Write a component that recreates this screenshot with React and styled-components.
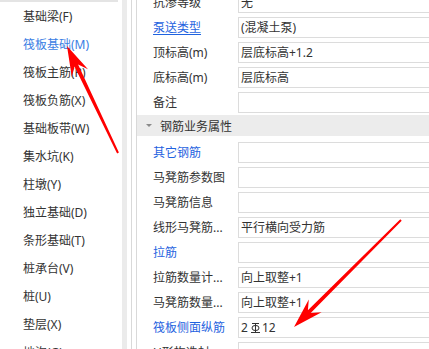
import React from "react";
import styled, { createGlobalStyle } from "styled-components";

const GlobalStyle = createGlobalStyle`
  html, body { margin: 0; padding: 0; background: #fff; overflow: hidden; }
  body { font-family: "Noto Sans", "Noto Sans CJK SC", sans-serif; }
`;

const Page = styled.div`
  position: relative;
  display: flex;
  width: 429px;
  height: 349px;
  overflow: hidden;
  background: #fff;
`;

const LeftPanel = styled.div`
  width: 122px;
  flex-shrink: 0;
  overflow: hidden;
`;

const TopBand = styled.div`
  width: 118px;
  height: 2px;
  background: #e4e4e4;
  margin-bottom: 1px;
`;

const ListItem = styled.div`
  height: 28px;
  line-height: 28px;
  padding-left: 23px;
  font-size: 12px;
  white-space: nowrap;
  color: ${(p) => (p.$active ? "#3a7ee4" : "#333")};
`;

const ScrollTrack = styled.div`
  width: 5px;
  flex-shrink: 0;
  background: #ebebeb;
`;

const Divider = styled.div`
  width: 1px;
  flex-shrink: 0;
  margin-left: ${(p) => p.$gap}px;
  background: #d9d9d9;
`;

const PropPanel = styled.div`
  flex: 1;
  min-width: 0;
  overflow: hidden;
`;

const PropList = styled.div`
  margin-top: -10px;
`;

const Row = styled.div`
  display: flex;
  height: 25px;
  padding: 2px 0;
  box-sizing: border-box;
`;

const Label = styled.div`
  width: 101px;
  flex-shrink: 0;
  padding-left: 16px;
  box-sizing: border-box;
  font-size: 12px;
  line-height: 21px;
  white-space: nowrap;
  overflow: hidden;
  color: ${(p) => (p.$link ? "#1f63e0" : "#333")};
  text-decoration: ${(p) => (p.$underline ? "underline" : "none")};
  text-underline-offset: 2px;
`;

const Value = styled.div`
  flex: 1;
  height: 21px;
  box-sizing: border-box;
  border: 1px solid #dcdcdc;
  border-right: none;
  padding-left: 2px;
  font-size: 12px;
  line-height: 19px;
  color: #333;
  white-space: nowrap;
  display: flex;
  align-items: center;
`;

const HeaderRow = styled.div`
  height: 25px;
  padding-bottom: 4px;
  box-sizing: border-box;
`;

const HeaderBand = styled.div`
  height: 21px;
  background: #ececec;
  display: flex;
  align-items: center;
  font-size: 12px;
  color: #333;
`;

const Caret = styled.span`
  width: 0;
  height: 0;
  margin-left: 9px;
  margin-right: 8px;
  border-left: 3px solid transparent;
  border-right: 3px solid transparent;
  border-top: 3px solid #8a8a8a;
`;

const Overlay = styled.svg`
  position: absolute;
  left: 0;
  top: 0;
  pointer-events: none;
`;

const RebarMark = () => (
  <svg width="11" height="12" viewBox="0 0 11 12" style={{ margin: "0 1px 0 2px" }}>
    <g stroke="#333" strokeWidth="1" fill="none">
      <line x1="2" y1="1.5" x2="9" y2="1.5" />
      <line x1="1" y1="10.5" x2="10" y2="10.5" />
      <line x1="5.5" y1="1.5" x2="5.5" y2="10.5" />
      <ellipse cx="5.5" cy="6" rx="3.5" ry="2.6" />
    </g>
  </svg>
);

const arrowPoints = (tx, ty, px, py, L = 28, W = 9) => {
  const dx = px - tx;
  const dy = py - ty;
  const len = Math.hypot(dx, dy);
  const ux = dx / len;
  const uy = dy / len;
  const nx = -uy;
  const ny = ux;
  const neck = L * 0.72;
  const bx = px - ux * L;
  const by = py - uy * L;
  const kx = px - ux * neck;
  const ky = py - uy * neck;
  const pts = [
    [tx + nx * 1, ty + ny * 1],
    [kx + nx * 2, ky + ny * 2],
    [bx + nx * W, by + ny * W],
    [px, py],
    [bx - nx * W, by - ny * W],
    [kx - nx * 2, ky - ny * 2],
    [tx - nx * 1, ty - ny * 1],
  ];
  return pts.map((p) => p.map((v) => v.toFixed(1)).join(",")).join(" ");
};

const leftItems = [
  "基础梁(F)",
  "筏板基础(M)",
  "筏板主筋(R)",
  "筏板负筋(X)",
  "基础板带(W)",
  "集水坑(K)",
  "柱墩(Y)",
  "独立基础(D)",
  "条形基础(T)",
  "桩承台(V)",
  "桩(U)",
  "垫层(X)",
  "地沟(G)",
];

const topRows = [
  { label: "抗渗等级", value: "无" },
  { label: "泵送类型", value: "(混凝土泵)", link: true, underline: true },
  { label: "顶标高(m)", value: "层底标高+1.2" },
  { label: "底标高(m)", value: "层底标高" },
  { label: "备注", value: "" },
];

const rebarRows = [
  { label: "其它钢筋", value: "", link: true },
  { label: "马凳筋参数图", value: "" },
  { label: "马凳筋信息", value: "" },
  { label: "线形马凳筋...", value: "平行横向受力筋" },
  { label: "拉筋", value: "", link: true },
  { label: "拉筋数量计...", value: "向上取整+1" },
  { label: "马凳筋数量...", value: "向上取整+1" },
  { label: "筏板侧面纵筋", value: "rebar", link: true },
  { label: "U形构造封...", value: "" },
];

const PropRow = ({ r }) => (
  <Row>
    <Label $link={r.link} $underline={r.underline}>{r.label}</Label>
    <Value>
      {r.value === "rebar" ? (
        <>
          2<RebarMark />12
        </>
      ) : (
        r.value
      )}
    </Value>
  </Row>
);

export default function App() {
  return (
    <>
      <GlobalStyle />
      <Page>
        <LeftPanel>
          <TopBand />
          {leftItems.map((t, i) => (
            <ListItem key={t} $active={i === 1}>
              {t}
            </ListItem>
          ))}
        </LeftPanel>
        <ScrollTrack />
        <Divider $gap={4} />
        <Divider $gap={4} />
        <PropPanel>
          <PropList>
            {topRows.map((r) => (
              <PropRow key={r.label} r={r} />
            ))}
            <HeaderRow>
              <HeaderBand>
                <Caret />
                钢筋业务属性
              </HeaderBand>
            </HeaderRow>
            {rebarRows.map((r) => (
              <PropRow key={r.label} r={r} />
            ))}
          </PropList>
        </PropPanel>
        <Overlay width="429" height="349" viewBox="0 0 429 349">
          <polygon points={arrowPoints(118, 153, 67, 46, 30, 9)} fill="#ff0000" />
          <polygon points={arrowPoints(401, 220, 294, 327, 30, 9)} fill="#ff0000" />
        </Overlay>
      </Page>
    </>
  );
}
